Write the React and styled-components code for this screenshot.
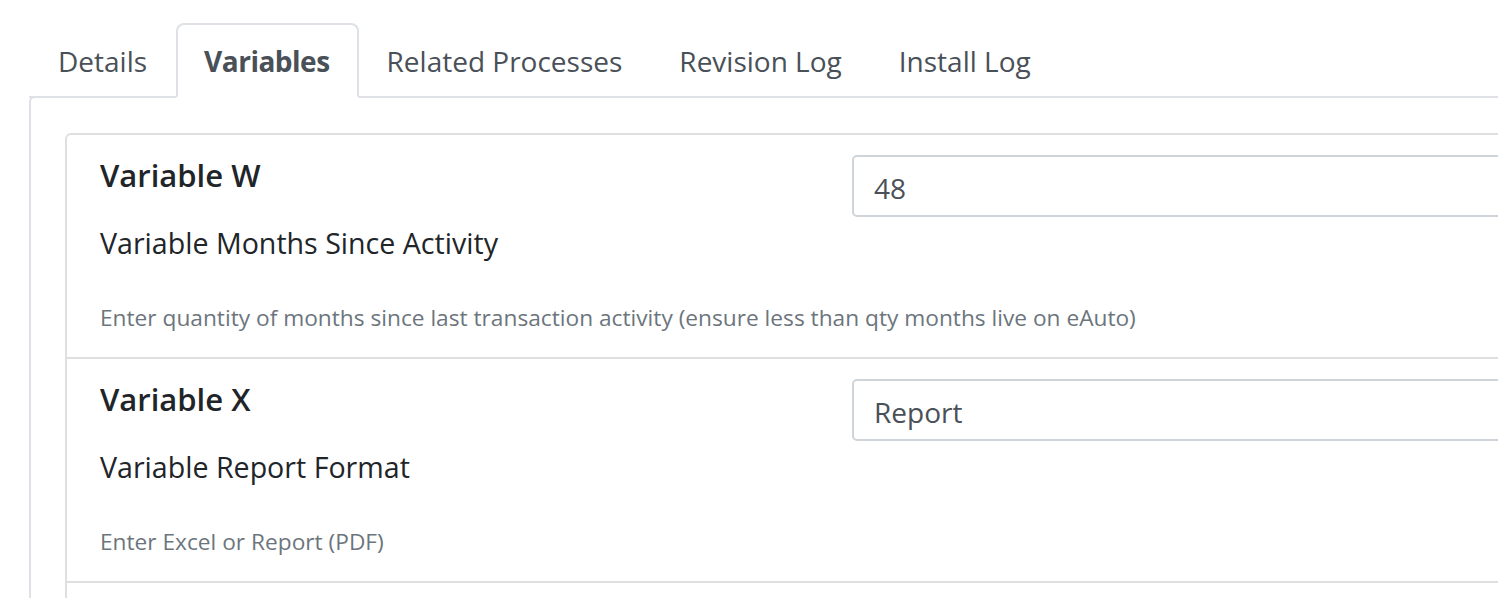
import React from "react";
import styled, { createGlobalStyle } from "styled-components";

const Global = createGlobalStyle`
  html, body { margin: 0; padding: 0; background: #fff; overflow: hidden; }
  body { font-family: "Open Sans", "Noto Sans", sans-serif; color: #212529; }
  * { box-sizing: border-box; }
`;

const Page = styled.div`
  padding: 23px 0 0 29px;
  width: 1700px;
`;

const TabList = styled.ul`
  display: flex;
  list-style: none;
  margin: 0;
  padding: 0;
  border-bottom: 2px solid #dee2e6;
`;

const Tab = styled.li`
  height: 75px;
  margin-bottom: -2px;
  padding: 0 27px 0 ${(p) => (p.$first ? "27px" : "26px")};
  display: flex;
  align-items: center;
  font-size: 28px;
  color: #495057;
  font-weight: ${(p) => (p.$active ? 700 : 400)};
  letter-spacing: ${(p) => (p.$active ? "-0.5px" : "0")};
  border: 2px solid ${(p) => (p.$active ? "#dee2e6" : "transparent")};
  border-bottom-color: ${(p) => (p.$active ? "#fff" : "transparent")};
  border-radius: 8px 8px 0 0;
  background: ${(p) => (p.$active ? "#fff" : "transparent")};
  position: relative;
`;

const Panel = styled.div`
  border: 2px solid #dee2e6;
  border-radius: 6px;
  margin-top: -2px;
  padding: 35px 0 0 34px;
  height: 600px;
`;

const Card = styled.div`
  border: 2px solid rgba(0, 0, 0, 0.125);
  border-radius: 6px;
  height: 600px;
`;

const Item = styled.div`
  padding: 20px 0 22px 33px;
  border-bottom: 2px solid rgba(0, 0, 0, 0.125);
`;

const ItemRow = styled.div`
  display: grid;
  grid-template-columns: 752px 760px;
`;

const Title = styled.h5`
  margin: 2px 0 28px;
  font-size: 31px;
  line-height: 1.2;
  font-weight: 600;
  color: #212529;
`;

const Label = styled.div`
  font-size: 28.6px;
  line-height: 1.5;
  color: #212529;
`;

const Input = styled.div`
  height: 62px;
  border: 2px solid #ced4da;
  border-radius: 5px;
  padding: 3px 20px 0;
  display: flex;
  align-items: center;
  font-size: 28px;
  color: #495057;
`;

const Desc = styled.small`
  display: block;
  margin-top: 36px;
  font-size: 22.7px;
  line-height: 1.5;
  color: #6c757d;
`;

const tabs = ["Details", "Variables", "Related Processes", "Revision Log", "Install Log"];

const vars = [
  {
    name: "Variable W",
    label: "Variable Months Since Activity",
    value: "48",
    desc: "Enter quantity of months since last transaction activity (ensure less than qty months live on eAuto)",
  },
  {
    name: "Variable X",
    label: "Variable Report Format",
    value: "Report",
    desc: "Enter Excel or Report (PDF)",
  },
];

export default function App() {
  return (
    <>
      <Global />
      <Page>
        <TabList>
          {tabs.map((t, i) => (
            <Tab key={t} $first={i === 0} $active={t === "Variables"}>
              {t}
            </Tab>
          ))}
        </TabList>
        <Panel>
          <Card>
            {vars.map((v) => (
              <Item key={v.name}>
                <ItemRow>
                  <div>
                    <Title>{v.name}</Title>
                    <Label>{v.label}</Label>
                  </div>
                  <Input>{v.value}</Input>
                </ItemRow>
                <Desc>{v.desc}</Desc>
              </Item>
            ))}
          </Card>
        </Panel>
      </Page>
    </>
  );
}
